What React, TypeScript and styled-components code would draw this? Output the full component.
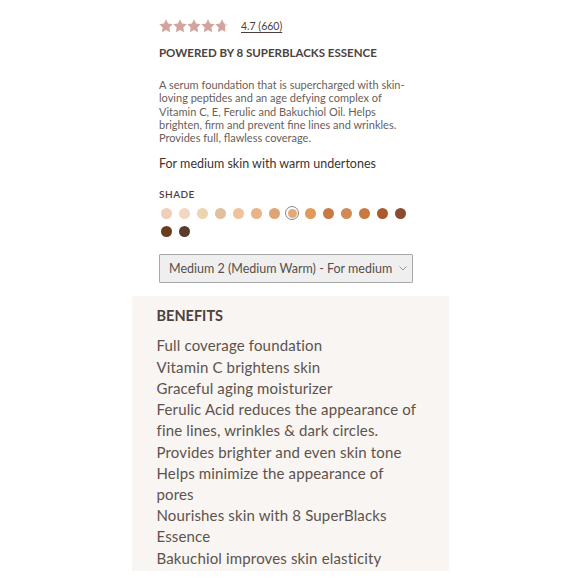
import styled, { createGlobalStyle } from "styled-components";

const GlobalStyle = createGlobalStyle`
  html, body {
    margin: 0;
    padding: 0;
    background: #ffffff;
  }
  body {
    font-family: Lato, "Noto Sans", sans-serif;
    -webkit-font-smoothing: antialiased;
  }
`;

const shades = [
  "#efcfb8",
  "#f2d7c2",
  "#ecd3b2",
  "#e1be9d",
  "#eec29c",
  "#e9b487",
  "#dea573",
  "#e3a978",
  "#e29a5a",
  "#c97a44",
  "#d08a57",
  "#c97940",
  "#a95b2f",
  "#8b4b30",
  "#6a3c1b",
  "#5b3b2b",
];

const SELECTED = 7;

const benefits = [
  "Full coverage foundation",
  "Vitamin C brightens skin",
  "Graceful aging moisturizer",
  "Ferulic Acid reduces the appearance of fine lines, wrinkles & dark circles.",
  "Provides brighter and even skin tone",
  "Helps minimize the appearance of pores",
  "Nourishes skin with 8 SuperBlacks Essence",
  "Bakuchiol improves skin elasticity",
];

// star with a partial fill, 4.7 -> last star 70% filled
const Star = ({ fill, idx }: { fill: number; idx: number }) => {
  const id = `star-grad-${idx}`;
  return (
    <svg width="14" height="14" viewBox="0 0 24 24">
      <defs>
        <linearGradient id={id}>
          <stop offset={`${fill * 100}%`} stopColor="#d3a49e" />
          <stop offset={`${fill * 100}%`} stopColor="#efe6e4" />
        </linearGradient>
      </defs>
      <path
        d="M12 0.5l3.5 7.4 8 1.1-5.8 5.6 1.4 8L12 18.8l-7.1 3.8 1.4-8L0.5 9l8-1.1z"
        fill={`url(#${id})`}
      />
    </svg>
  );
};

export default function App() {
  return (
    <>
      <GlobalStyle />
      <Page>
        <Column>
          <RatingRow>
            <Stars>
              {[1, 1, 1, 1, 0.7].map((f, i) => (
                <Star key={i} idx={i} fill={f} />
              ))}
            </Stars>
            <RatingLink>4.7 (660)</RatingLink>
          </RatingRow>

          <Headline>POWERED BY 8 SUPERBLACKS ESSENCE</Headline>

          <Description>
            A serum foundation that is supercharged with skin-loving peptides and an age
            defying complex of Vitamin C, E, Ferulic and Bakuchiol Oil. Helps brighten, firm
            and prevent fine lines and wrinkles. Provides full, flawless coverage.
          </Description>

          <SkinNote>For medium skin with warm undertones</SkinNote>

          <ShadeLabel>SHADE</ShadeLabel>
          <Swatches>
            {shades.map((c, i) => (
              <Swatch key={i} $color={c} $selected={i === SELECTED} />
            ))}
          </Swatches>

          <SelectWrap>
            <ShadeSelect defaultValue="m2">
              <option value="m2">Medium 2 (Medium Warm) - For medium skin with warm undertones</option>
            </ShadeSelect>
            <Chevron width="8" height="5" viewBox="0 0 8 5">
              <path d="M0.5 0.5L4 4l3.5-3.5" fill="none" stroke="#9a9490" strokeWidth="1" />
            </Chevron>
          </SelectWrap>
        </Column>

        <BenefitsPanel>
          <BenefitsTitle>BENEFITS</BenefitsTitle>
          <BenefitList>
            {benefits.map((b) => (
              <Benefit key={b}>{b}</Benefit>
            ))}
          </BenefitList>
        </BenefitsPanel>
      </Page>
    </>
  );
}

const Page = styled.div`
  width: 580px;
  display: flex;
  flex-direction: column;
  align-items: center;
  padding-top: 19px;
`;

const Column = styled.div`
  width: 262px;
  display: flex;
  flex-direction: column;
  align-items: flex-start;
`;

const RatingRow = styled.div`
  display: flex;
  align-items: center;
  gap: 12px;
  height: 14px;
`;

const Stars = styled.div`
  display: flex;
`;

const RatingLink = styled.a`
  font-size: 10.5px;
  color: #4a403b;
  text-decoration: underline;
  text-underline-offset: 2px;
`;

const Headline = styled.h2`
  margin: 13px 0 0;
  font-size: 11.5px;
  font-weight: 700;
  letter-spacing: 0;
  color: #4c423d;
  line-height: 14px;
`;

const Description = styled.p`
  margin: 18px 0 0;
  font-size: 11px;
  line-height: 13.3px;
  letter-spacing: 0;
  color: #6a605a;
`;

const SkinNote = styled.p`
  margin: 12px 0 0;
  font-size: 12.5px;
  line-height: 16px;
  color: #3c3431;
`;

const ShadeLabel = styled.div`
  margin-top: 16px;
  font-size: 10px;
  font-weight: 600;
  letter-spacing: 0.5px;
  color: #4c423d;
  line-height: 12px;
`;

const Swatches = styled.div`
  margin-top: 6px;
  display: flex;
  flex-wrap: wrap;
  gap: 4px;
  width: 254px;
`;

const Swatch = styled.span<{ $color: string; $selected: boolean }>`
  width: 14px;
  height: 14px;
  border-radius: 50%;
  box-sizing: border-box;
  background: ${({ $color }) => $color};
  background-clip: content-box;
  padding: ${({ $selected }) => ($selected ? "1.5px" : "0.5px")};
  border: 1px solid ${({ $selected }) => ($selected ? "#8a8380" : "transparent")};
`;

const SelectWrap = styled.div`
  position: relative;
  margin-top: 16px;
  width: 254px;
  height: 29px;
`;

const ShadeSelect = styled.select`
  appearance: none;
  box-sizing: border-box;
  width: 100%;
  height: 100%;
  padding: 0 20px 0 9px;
  font-family: Lato, "Noto Sans", sans-serif;
  font-size: 12.5px;
  color: #57504c;
  background: #efefef;
  border: 1px solid #a9a9a9;
  border-radius: 1px;
`;

const Chevron = styled.svg`
  position: absolute;
  right: 6px;
  top: 12px;
  pointer-events: none;
`;

const BenefitsPanel = styled.section`
  margin-top: 13px;
  width: 317px;
  box-sizing: border-box;
  padding: 11px 25px 2px;
  background: #f8f5f2;
`;

const BenefitsTitle = styled.h3`
  margin: 0;
  font-size: 14.5px;
  font-weight: 700;
  color: #4c423d;
  line-height: 18px;
`;

const BenefitList = styled.ul`
  list-style: none;
  margin: 10px 0 0;
  padding: 0;
`;

const Benefit = styled.li`
  font-size: 15px;
  line-height: 21.2px;
  letter-spacing: 0.15px;
  color: #5d534d;
`;
